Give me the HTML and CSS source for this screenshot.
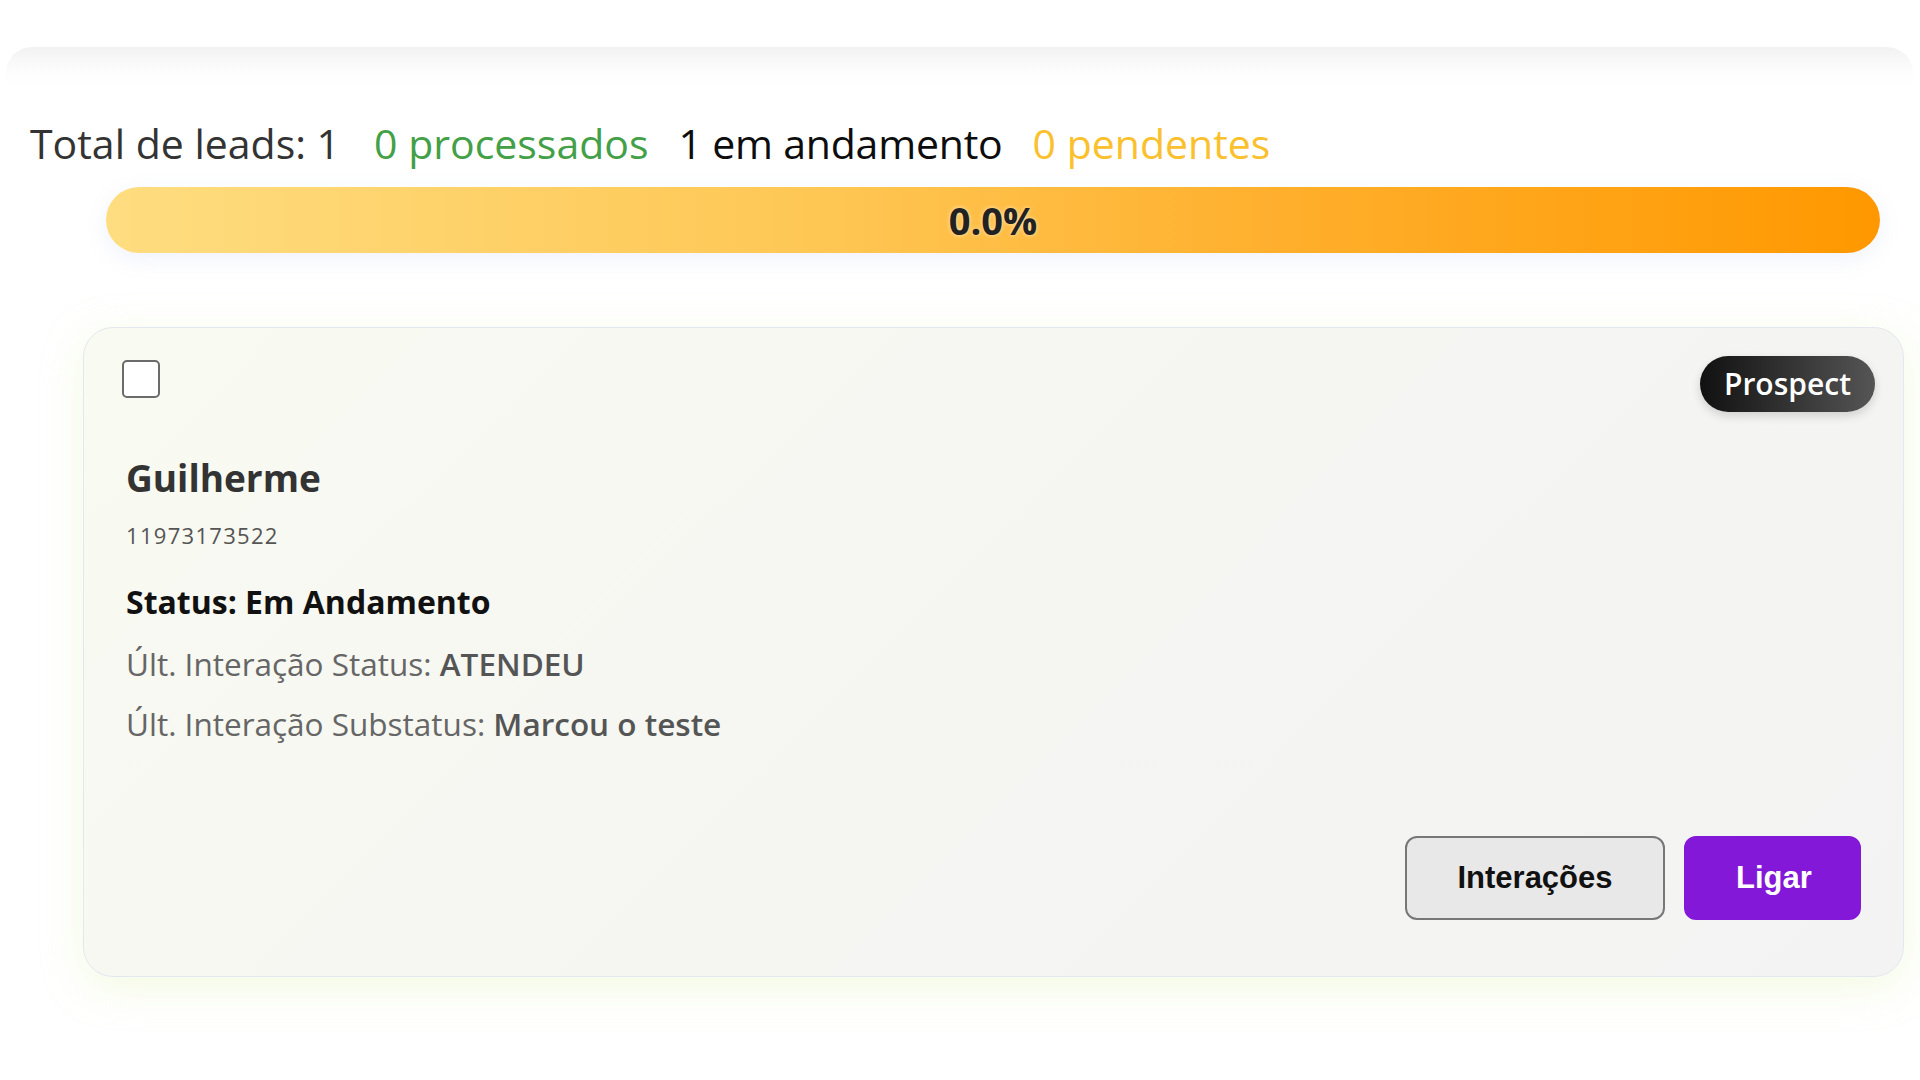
FILE: index.html
```html
<!DOCTYPE html>
<html lang="pt-BR">
<head>
<meta charset="utf-8">
<title>Leads</title>
<link rel="stylesheet" href="styles.css">
</head>
<body>
<div class="panel">
  <div class="stats">
    <span class="stat total">Total de leads: 1</span>
    <span class="stat done">0 processados</span>
    <span class="stat progress-count">1 em andamento</span>
    <span class="stat pending">0 pendentes</span>
  </div>
  <div class="bar">
    <span class="bar-label">0.0%</span>
  </div>
  <div class="card">
    <div class="card-top">
      <input type="checkbox" class="check">
      <span class="badge">Prospect</span>
    </div>
    <h2 class="name">Guilherme</h2>
    <div class="phone">11973173522</div>
    <div class="status">Status: Em Andamento</div>
    <div class="info">Últ. Interação Status: <span class="val">ATENDEU</span></div>
    <div class="info">Últ. Interação Substatus: <span class="val">Marcou o teste</span></div>
    <div class="actions">
      <button class="btn btn-light">Interações</button>
      <button class="btn btn-purple">Ligar</button>
    </div>
  </div>
</div>
</body>
</html>
```
FILE: styles.css
```css
* { box-sizing: border-box; }
html, body { margin: 0; padding: 0; background: #ffffff; }
body {
  font-family: "Open Sans", "Noto Sans", sans-serif;
  color: #333;
  height: 1080px;
  overflow: hidden;
}
.panel {
  margin: 47px 7px 0 6px;
  border-radius: 26px 26px 0 0;
  background: linear-gradient(180deg, #f2f2f2 0px, #fcfcfc 22px, #ffffff 40px);
  padding: 66px 9px 0 0;
}
.stats {
  display: flex;
  align-items: baseline;
  gap: 30px;
  padding-left: 24px;
  font-size: 41px;
  line-height: 60px;
}
.stat.total { color: #333333; }
.stat.done { color: #43a047; margin-left: 4px; }
.stat.progress-count { color: #0d0d0d; letter-spacing: -0.2px; }
.stat.pending { color: #fbc02d; }
.bar {
  margin: 14px 24px 0 100px;
  height: 66px;
  border-radius: 33px;
  background: linear-gradient(90deg, #fedd80 0%, #fec754 40%, #ffb02e 65%, #ff9800 100%);
  box-shadow: 0 6px 22px rgba(120, 150, 210, 0.12);
  display: flex;
  align-items: center;
  justify-content: center;
}
.bar-label {
  font-size: 38px;
  font-weight: 700;
  color: #222;
  text-shadow: 0 0 4px rgba(255, 255, 255, 0.7);
}
.card {
  margin: 74px 0 0 77px;
  border: 1px solid #e3e7ef;
  border-radius: 30px;
  background: linear-gradient(135deg, #f9faf1 0%, #f5f6f2 50%, #f3f3f3 100%);
  box-shadow: 0 10px 40px rgba(220, 240, 170, 0.35);
  padding: 32px 42px 56px 38px;
  height: 650px;
  display: flex;
  flex-direction: column;
}
.card-top {
  display: flex;
  justify-content: space-between;
  align-items: flex-start;
  height: 95px;
}
.check {
  appearance: none;
  -webkit-appearance: none;
  width: 38px;
  height: 38px;
  margin: 0;
  border: 2px solid #6b6b6b;
  border-radius: 5px;
  background: #fff;
}
.badge {
  margin-top: -4px;
  margin-right: -14px;
  height: 56px;
  padding: 0 24px;
  border-radius: 28px;
  background: linear-gradient(90deg, #111111 0%, #333333 50%, #555555 100%);
  color: #fff;
  font-size: 30px;
  font-weight: 600;
  line-height: 56px;
  box-shadow: 0 4px 10px rgba(0, 0, 0, 0.15);
}
.name {
  margin: 0 0 0 4px;
  font-size: 37px;
  font-weight: 700;
  line-height: 46px;
  color: #333;
}
.phone {
  margin: 19px 0 0 4px;
  font-size: 22px;
  line-height: 30px;
  color: #555;
  letter-spacing: 1.3px;
}
.status {
  margin: 30px 0 0 4px;
  font-size: 32px;
  font-weight: 700;
  line-height: 44px;
  color: #111;
}
.info {
  margin: 18px 0 0 4px;
  font-size: 31.5px;
  line-height: 44px;
  color: #666;
}
.info + .info { margin-top: 16px; }
.info .val { color: #555; font-weight: 600; }
.actions {
  margin-top: auto;
  display: flex;
  justify-content: flex-end;
  gap: 19px;
}
.btn {
  height: 84px;
  padding: 0 50px;
  border-radius: 12px;
  font-family: "Liberation Sans", Arial, sans-serif;
  font-size: 31px;
  font-weight: 700;
  cursor: pointer;
}
.btn-light {
  background: #e8e8e8;
  color: #111;
  border: 2px solid #777;
  width: 260px;
}
.btn-purple {
  background: #8418d8;
  color: #fff;
  border: 2px solid #8418d8;
  width: 177px;
}
```
